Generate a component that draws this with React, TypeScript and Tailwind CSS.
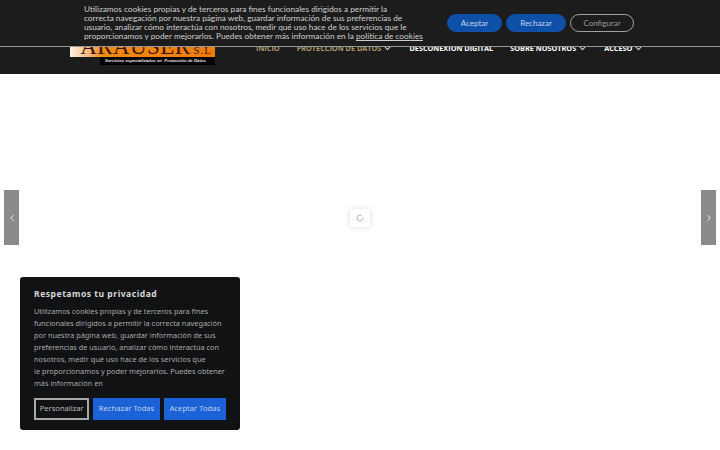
import { ChevronDown, ChevronLeft, ChevronRight, LoaderCircle } from "lucide-react";

const navItems = [
  { label: "INICIO", color: "text-[#ad9a68]" },
  { label: "PROTECCION DE DATOS", color: "text-[#ad9a68]", arrow: true },
  { label: "DESCONEXION DIGITAL", color: "text-white" },
  { label: "SOBRE NOSOTROS", color: "text-white", arrow: true },
  { label: "ACCESO", color: "text-white", arrow: true },
];

function Header() {
  return (
    <header className="relative h-[74px] bg-[#1c1c1c] overflow-hidden">
      <div className="flex items-start pl-[70px] pt-[32px]">
        {/* Logo */}
        <div className="w-[145px]">
          <div className="h-[25px] flex justify-end items-end pr-[3px] bg-gradient-to-r from-[#fdf3e6] via-[#f08a14] via-[22%] to-[#f07c0a] overflow-hidden">
            <span className="font-['Liberation_Serif',serif] text-[23px] leading-[20px] text-[#3a1408] tracking-[0.4px]">
              ARAUSER
            </span>
            <span className="font-['Liberation_Serif',serif] text-[11px] leading-[14px] text-[#3a1408] ml-[3px] tracking-[1px]">
              S.L
            </span>
          </div>
          <div className="ml-[30px] h-[8px] bg-black flex items-center justify-center pr-[4px]">
            <span className="font-['Liberation_Sans',sans-serif] text-[4.3px] leading-[8px] font-bold italic text-[#e8e8e8] whitespace-nowrap">
              Servicios especializados en&nbsp; Protección de Datos
            </span>
          </div>
        </div>

        {/* Nav */}
        <nav className="flex items-center ml-[41px] mt-[10px] gap-[17px] font-['Open_Sans',sans-serif] text-[7.3px] leading-[12px] font-bold">
          {navItems.map((item) => (
            <span key={item.label} className={`flex items-center whitespace-nowrap ${item.color}`}>
              {item.label}
              {item.arrow && <ChevronDown size={9} strokeWidth={3} className="ml-[2px] text-[#d8d8d8]" />}
            </span>
          ))}
        </nav>
      </div>

      {/* Aviso superior */}
      <div className="absolute top-0 left-0 right-0 h-[47px] bg-[#1c1c1c] border-b border-[#999999] flex items-start pl-[84px]">
        <p className="w-[345px] mt-[5px] font-['Lato',sans-serif] text-[8.25px] leading-[9px] text-[#cfcfcf] whitespace-nowrap">
          Utilizamos cookies propias y de terceros para fines funcionales dirigidos a permitir la
          <br />
          correcta navegación por nuestra página web, guardar información de sus preferencias de
          <br />
          usuario, analizar cómo interactúa con nosotros, medir qué uso hace de los servicios que le
          <br />
          proporcionamos y poder mejorarlos. Puedes obtener más información en la{" "}
          <span className="underline">política de cookies</span>
        </p>
        <div className="flex gap-[4px] ml-[18px] mt-[14px] font-['Lato',sans-serif] text-[8px]">
          <button className="w-[55px] h-[18px] rounded-full bg-[#0e50a8] text-[#c5d4ea]">Aceptar</button>
          <button className="w-[60px] h-[18px] rounded-full bg-[#0e50a8] text-[#c5d4ea]">Rechazar</button>
          <button className="w-[64px] h-[18px] rounded-full border border-[#a0a0a0] text-[#9a9a9a]">Configurar</button>
        </div>
      </div>
    </header>
  );
}

function CookiePopup() {
  return (
    <div className="absolute left-[20px] top-[277px] w-[220px] h-[153px] rounded-[3px] bg-[#111214] px-[14px] pt-[10px] font-['Noto_Sans',sans-serif]">
      <h2 className="text-[8.6px] leading-[14px] font-bold tracking-[0.5px] text-[#d8d8d8]">Respetamos tu privacidad</h2>
      <p className="mt-[4px] text-[7.35px] leading-[12px] text-[#a8a8a8] whitespace-nowrap">
        Utilizamos cookies propias y de terceros para fines
        <br />
        funcionales dirigidos a permitir la correcta navegación
        <br />
        por nuestra página web, guardar información de sus
        <br />
        preferencias de usuario, analizar cómo interactúa con
        <br />
        nosotros, medir qué uso hace de los servicios que
        <br />
        le proporcionamos y poder mejorarlos. Puedes obtener
        <br />
        más información en
      </p>
      <div className="flex gap-[4px] mt-[9px] text-[7.6px]">
        <button className="w-[56px] h-[22px] border-2 border-[#a8a8a8] text-[#b8b8b8]">Personalizar</button>
        <button className="w-[67px] h-[22px] bg-[#1a62d6] text-[#bcd0ee]">Rechazar Todas</button>
        <button className="w-[63px] h-[22px] bg-[#1a62d6] text-[#bcd0ee]">Aceptar Todas</button>
      </div>
    </div>
  );
}

export default function App() {
  return (
    <div className="relative w-[720px] h-[450px] overflow-hidden bg-white">
      <Header />

      {/* Flechas del slider */}
      <div className="absolute left-[4px] top-[190px] w-[15px] h-[55px] bg-[#8a8a8a] flex items-center justify-center">
        <ChevronLeft size={10} strokeWidth={2} className="text-white" />
      </div>
      <div className="absolute right-[4px] top-[190px] w-[15px] h-[55px] bg-[#8a8a8a] flex items-center justify-center">
        <ChevronRight size={10} strokeWidth={2} className="text-white" />
      </div>

      {/* Cargando */}
      <div className="absolute left-[350px] top-[209px] w-[20px] h-[18px] rounded-[2px] bg-white shadow-[0_0_6px_rgba(0,0,0,0.15)] flex items-center justify-center">
        <LoaderCircle size={8} strokeWidth={2} className="text-[#888888]" />
      </div>

      <CookiePopup />
    </div>
  );
}
